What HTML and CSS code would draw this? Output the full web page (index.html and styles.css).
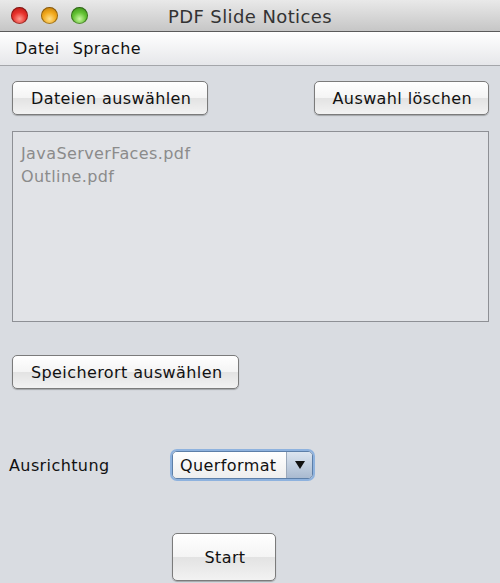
FILE: index.html
```html
<!DOCTYPE html>
<html lang="de">
<head>
<meta charset="utf-8">
<link rel="stylesheet" href="styles.css">
</head>
<body>
<div class="window">
  <div class="titlebar">
    <div class="lights">
      <span class="light red"></span>
      <span class="light yellow"></span>
      <span class="light green"></span>
    </div>
    <div class="title">PDF Slide Notices</div>
  </div>
  <div class="menubar">
    <span class="menu">Datei</span>
    <span class="menu">Sprache</span>
  </div>
  <div class="content">
    <div class="row-top">
      <button class="btn">Dateien auswählen</button>
      <button class="btn">Auswahl löschen</button>
    </div>
    <div class="list">
      <div class="item">JavaServerFaces.pdf</div>
      <div class="item">Outline.pdf</div>
    </div>
    <div class="row-save">
      <button class="btn">Speicherort auswählen</button>
    </div>
    <div class="row-orient">
      <span class="label">Ausrichtung</span>
      <div class="combo">
        <span class="combo-text">Querformat</span>
        <span class="combo-arrow"><svg width="10" height="8" viewBox="0 0 10 8"><path d="M0 0H10L5 8Z" fill="#111"/></svg></span>
      </div>
    </div>
    <div class="row-start">
      <button class="btn start">Start</button>
    </div>
  </div>
</div>
</body>
</html>
```
FILE: styles.css
```css
html, body {
  margin: 0;
  padding: 0;
}
body {
  width: 500px;
  height: 583px;
  overflow: hidden;
  background: #d9dce1;
  font-family: "DejaVu Sans", "Liberation Sans", sans-serif;
  letter-spacing: 0.4px;
}
.window {
  display: flex;
  flex-direction: column;
}
.titlebar {
  height: 31px;
  border-bottom: 1px solid #5b5b5b;
  background: linear-gradient(#e9e9e9, #c6c6c6);
  display: flex;
  align-items: center;
  justify-content: center;
  position: relative;
}
.lights {
  position: absolute;
  left: 11px;
  top: 7px;
  display: flex;
  gap: 13px;
}
.light {
  width: 17px;
  height: 17px;
  border-radius: 50%;
  box-shadow: inset 0 0 0 1px rgba(0,0,0,0.35);
}
.red { background: radial-gradient(circle at 50% 70%, #ff9a90 0%, #e8322c 45%, #a8100c 100%); }
.yellow { background: radial-gradient(circle at 50% 70%, #ffe08a 0%, #f2a91c 45%, #b26d05 100%); }
.green { background: radial-gradient(circle at 50% 70%, #c8f7a0 0%, #63c233 45%, #2f7d12 100%); }
.title {
  font-size: 18px;
  color: #333;
  margin-top: 1px;
}
.menubar {
  height: 33px;
  border-bottom: 1px solid #a4a6aa;
  background: linear-gradient(#ffffff, #e6e7ea);
  display: flex;
  align-items: center;
  padding-left: 15px;
  gap: 13px;
  font-size: 16px;
  color: #111;
}
.content {
  padding: 15px 11px 0 12px;
  display: flex;
  flex-direction: column;
}
.btn {
  font-family: inherit;
  letter-spacing: inherit;
  font-size: 16px;
  color: #111;
  height: 34px;
  padding: 0 16px 0 18px;
  border: 1px solid #7b7b7b;
  border-radius: 5px;
  background: linear-gradient(#ffffff 0%, #f4f4f4 50%, #e3e3e3 51%, #f2f2f2 100%);
  box-shadow: 0 1px 1px rgba(0,0,0,0.25);
}
.row-top {
  display: flex;
  justify-content: space-between;
}
.list {
  margin-top: 16px;
  height: 191px;
  border: 1px solid #8e9095;
  background: #e1e3e7;
  padding: 10px 8px;
  box-sizing: border-box;
}
.item {
  font-size: 16px;
  color: #8b8b8b;
  line-height: 23px;
}
.row-save {
  margin-top: 33px;
}
.row-orient {
  margin-top: 62px;
  display: flex;
  align-items: center;
  margin-left: -3px;
}
.label {
  font-size: 16px;
  color: #111;
  width: 163px;
}
.combo {
  display: flex;
  height: 28px;
  width: 141px;
  border: 1px solid #5d7fa8;
  border-radius: 5px;
  box-shadow: 0 0 0 2px #8eb2de;
  overflow: hidden;
  box-sizing: border-box;
}
.combo-text {
  flex: 1;
  display: flex;
  align-items: center;
  padding-left: 7px;
  font-size: 16px;
  color: #111;
  background: linear-gradient(#ffffff, #eeeeee);
}
.combo-arrow {
  width: 25px;
  display: flex;
  align-items: center;
  justify-content: center;
  border-left: 1px solid #9aa8ba;
  background: linear-gradient(#dce5f0, #a9bad0);
}
.row-start {
  margin-top: 54px;
  padding-left: 160px;
}
.start {
  width: 104px;
  height: 48px;
}
```
